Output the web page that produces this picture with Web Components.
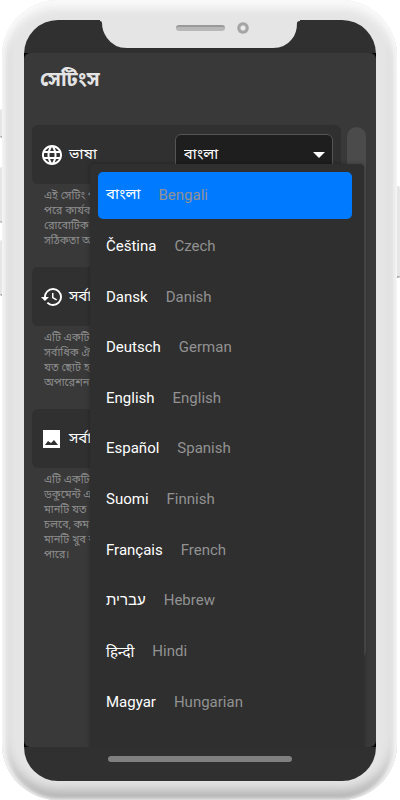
<!DOCTYPE html>
<html lang="bn">
<head>
<meta charset="utf-8">
<meta name="viewport" content="width=device-width, initial-scale=1">
<title>সেটিংস</title>
<style>
  body {
    margin: 0;
    background: #fff;
    font-family: Roboto, "Noto Sans Bengali", "Noto Sans", sans-serif;
  }
</style>
</head>
<body>
<phone-frame>
  <settings-page heading="সেটিংস">
    <setting-card icon="globe" label="ভাষা" picker="বাংলা">
      এই সেটিং প<br>পরে কার্যক<br>রোবোটিক<br>সঠিকতা অ
    </setting-card>
    <setting-card icon="history" label="সর্বা">
      এটি একটি<br>সর্বাধিক ঐ<br>যত ছোট হ<br>অপারেশন
    </setting-card>
    <setting-card icon="image" label="সর্বা">
      এটি একটি<br>ডকুমেন্ট এ<br>মানটি যত ে<br>চলবে, কম<br>মানটি খুব ব<br>পারে।
    </setting-card>
    <language-menu slot="overlay">
      <language-item selected name="Bengali">বাংলা</language-item>
      <language-item name="Czech">Čeština</language-item>
      <language-item name="Danish">Dansk</language-item>
      <language-item name="German">Deutsch</language-item>
      <language-item name="English">English</language-item>
      <language-item name="Spanish">Español</language-item>
      <language-item name="Finnish">Suomi</language-item>
      <language-item name="French">Français</language-item>
      <language-item name="Hebrew">עברית</language-item>
      <language-item name="Hindi">हिन्दी</language-item>
      <language-item name="Hungarian">Magyar</language-item>
    </language-menu>
  </settings-page>
</phone-frame>

<script>
class PhoneFrame extends HTMLElement {
  connectedCallback() {
    this.attachShadow({ mode: 'open' });
    this.shadowRoot.innerHTML = `
      <style>
        :host {
          display: flex;
          box-sizing: border-box;
          min-height: 100vh;
          padding: 0 3px 0 2px;
          position: relative;
        }

        .key {
          position: absolute;
          width: 4px;
          box-sizing: border-box;
          background: #e6e6e6;
          border-bottom: 2px solid #b0b0b0;
          border-radius: 2px;
        }

        .left { left: 0; }
        .right { right: 0; }

        .body {
          flex: 1;
          display: flex;
          box-sizing: border-box;
          padding: 20px 21px 19px 22px;
          position: relative;
          border-radius: 56px;
          background: #e5e5e5;
          box-shadow: inset 0 8px 10px #fafafa, inset 4px 0 4px #f0f0f0,
            inset -4px 0 4px #f0f0f0, inset 0 -10px 12px #b2b2b2;
        }

        .screen {
          flex: 1;
          display: flex;
          flex-direction: column;
          border-radius: 34px;
          overflow: hidden;
          background: #303030;
        }

        .status { height: 33px; }

        .app {
          flex: 1;
          display: flex;
          background: #000;
        }

        .home {
          display: flex;
          justify-content: center;
          height: 25px;
          padding-top: 9px;
        }

        .home span {
          width: 52%;
          height: 6px;
          border-radius: 3px;
          background: #808080;
        }

        .notch {
          position: absolute;
          top: 19px;
          left: 50%;
          width: 200px;
          height: 30px;
          margin-left: -100px;
        }

        .speaker {
          position: absolute;
          top: 25px;
          left: 50%;
          width: 49px;
          height: 6px;
          margin-left: -24px;
          box-sizing: border-box;
          border-radius: 3px;
          background: #b8b8b8;
          border-top: 2px solid #999;
        }

        .camera {
          position: absolute;
          top: 22px;
          left: 50%;
          width: 12px;
          height: 12px;
          margin-left: 37px;
          border-radius: 50%;
          background: radial-gradient(circle, #ececec 2px, #aaa 3px, #a2a2a2 5px, #c4c4c4 6px);
        }
      </style>
      <span class="key left" style="top: 109px; height: 29px"></span>
      <span class="key left" style="top: 167px; height: 56px"></span>
      <span class="key left" style="top: 240px; height: 56px"></span>
      <span class="key right" style="top: 186px; height: 92px"></span>
      <div class="body">
        <div class="screen">
          <div class="status"></div>
          <div class="app"><slot></slot></div>
          <div class="home"><span></span></div>
        </div>
        <svg class="notch" viewBox="0 0 200 30" aria-hidden="true">
          <path fill="#e5e5e5" d="M0 0H200V2Q197 2 197 4Q197 14 192 20Q185 29 173 29H27Q14 29 7 19Q2 12 2 4Q2 2 0 2Z"/>
        </svg>
        <span class="speaker"></span>
        <span class="camera"></span>
      </div>
    `;
  }
}

class SettingsPage extends HTMLElement {
  connectedCallback() {
    this.attachShadow({ mode: 'open' });
    this.shadowRoot.innerHTML = `
      <style>
        :host {
          flex: 1;
          display: flex;
          flex-direction: column;
          position: relative;
          overflow: hidden;
          border-radius: 6px;
          background: #393939;
          color: #fff;
        }

        h1 {
          margin: 0;
          padding: 14px 16px 34px;
          font-size: 20px;
          line-height: 24px;
          font-weight: 700;
          color: #e4e4e4;
        }

        .content {
          flex: 1;
          display: flex;
          gap: 6px;
          padding: 0 10px 87px 8px;
        }

        .list { flex: 1; }

        .bar {
          width: 19px;
          margin-top: 2px;
          border-radius: 10px;
          background: #4b4b4b;
        }
      </style>
      <h1>${this.getAttribute('heading')}</h1>
      <div class="content">
        <div class="list"><slot></slot></div>
        <div class="bar"></div>
      </div>
      <slot name="overlay"></slot>
    `;
  }
}

const ICONS = {
  globe: 'M11.99 2C6.47 2 2 6.48 2 12s4.47 10 9.99 10C17.52 22 22 17.52 22 12S17.52 2 11.99 2zm6.93 6h-2.95a15.65 15.65 0 0 0-1.38-3.56A8.03 8.03 0 0 1 18.92 8zM12 4.04c.83 1.2 1.48 2.53 1.91 3.96h-3.82c.43-1.43 1.08-2.76 1.91-3.96zM4.26 14C4.1 13.36 4 12.69 4 12s.1-1.36.26-2h3.38c-.08.66-.14 1.32-.14 2s.06 1.34.14 2H4.26zm.82 2h2.95c.32 1.25.78 2.45 1.38 3.56A7.99 7.99 0 0 1 5.08 16zm2.95-8H5.08a7.99 7.99 0 0 1 4.33-3.56A15.65 15.65 0 0 0 8.03 8zM12 19.96c-.83-1.2-1.48-2.53-1.91-3.96h3.82c-.43 1.43-1.08 2.76-1.91 3.96zM14.34 14H9.66c-.09-.66-.16-1.32-.16-2s.07-1.35.16-2h4.68c.09.65.16 1.32.16 2s-.07 1.34-.16 2zm.25 5.56c.6-1.11 1.06-2.31 1.38-3.56h2.95a8.03 8.03 0 0 1-4.33 3.56zM16.36 14c.08-.66.14-1.32.14-2s-.06-1.34-.14-2h3.38c.16.64.26 1.31.26 2s-.1 1.36-.26 2h-3.38z',
  history: 'M13 3a9 9 0 0 0-9 9H1l3.89 3.89.07.14L9 12H6c0-3.87 3.13-7 7-7s7 3.13 7 7-3.13 7-7 7c-1.93 0-3.68-.79-4.94-2.06l-1.42 1.42A8.954 8.954 0 0 0 13 21a9 9 0 0 0 0-18zm-1 5v5l4.28 2.54.72-1.21-3.5-2.08V8H12z',
  image: 'M3 3H20V21H3ZM8 14L5 18H18L14 13L11 16Z'
};

class SettingCard extends HTMLElement {
  connectedCallback() {
    const label = this.getAttribute('label');
    const picker = this.getAttribute('picker');
    this.attachShadow({ mode: 'open' });
    this.shadowRoot.innerHTML = `
      <style>
        :host { display: block; }

        .card {
          display: flex;
          align-items: center;
          box-sizing: border-box;
          height: 59px;
          padding: 0 8px;
          border-radius: 6px;
          background: #303030;
        }

        svg {
          width: 24px;
          height: 24px;
          margin-right: 5px;
          fill: #fff;
        }

        .label {
          flex: 1;
          padding-bottom: 2px;
          font-size: 15px;
          line-height: 20px;
        }

        .picker {
          position: relative;
          width: 54%;
        }

        select {
          appearance: none;
          width: 100%;
          height: 42px;
          padding: 0 8px 2px;
          border: 1px solid #555;
          border-radius: 6px;
          background: #1e1e1e;
          color: #fff;
          font: 15px Roboto, "Noto Sans Bengali", "Noto Sans", sans-serif;
        }

        .picker::after {
          content: "";
          position: absolute;
          right: 8px;
          top: 18px;
          border: 6px solid transparent;
          border-top-color: #fff;
          border-bottom: 0;
        }

        p {
          margin: 0;
          padding: 4px 12px 19px;
          font-size: 11px;
          line-height: 15px;
          color: #8c8c8c;
        }
      </style>
      <div class="card">
        <svg viewBox="0 0 24 24" aria-hidden="true">
          <path fill-rule="evenodd" d="${ICONS[this.getAttribute('icon')]}"/>
        </svg>
        ${picker
          ? `<label class="label" for="value">${label}</label><div class="picker"><select id="value"><option>${picker}</option></select></div>`
          : `<span class="label">${label}</span>`}
      </div>
      <p><slot></slot></p>
    `;
  }
}

class LanguageMenu extends HTMLElement {
  connectedCallback() {
    this.setAttribute('role', 'listbox');
    this.attachShadow({ mode: 'open' });
    this.shadowRoot.innerHTML = `
      <style>
        :host {
          position: absolute;
          top: 111px;
          right: 12px;
          bottom: 0;
          left: 66px;
          display: grid;
          grid-auto-rows: 1fr;
          gap: 4px;
          box-sizing: border-box;
          padding: 8px 12px 22px 8px;
          overflow: hidden;
          border-radius: 4px 4px 0 0;
          background: #2f2f2f;
          box-shadow: 0 0 4px rgba(0, 0, 0, 0.3);
        }
      </style>
      <slot></slot>
    `;
  }
}

class LanguageItem extends HTMLElement {
  connectedCallback() {
    this.setAttribute('role', 'option');
    this.setAttribute('aria-selected', this.hasAttribute('selected'));
    this.attachShadow({ mode: 'open' });
    this.shadowRoot.innerHTML = `
      <style>
        :host { display: flex; }

        button {
          flex: 1;
          display: flex;
          align-items: center;
          gap: 18px;
          padding: 0 8px;
          border: 0;
          border-radius: 5px;
          background: none;
          color: #fff;
          font: 15px Roboto, "Noto Sans Bengali", "Noto Sans", sans-serif;
          text-align: left;
        }

        :host([selected]) button { background: #007aff; }

        .name { color: #929292; }
      </style>
      <button type="button"><span><slot></slot></span><span class="name">${this.getAttribute('name')}</span></button>
    `;
  }
}

customElements.define('phone-frame', PhoneFrame);
customElements.define('settings-page', SettingsPage);
customElements.define('setting-card', SettingCard);
customElements.define('language-menu', LanguageMenu);
customElements.define('language-item', LanguageItem);
</script>
</body>
</html>
